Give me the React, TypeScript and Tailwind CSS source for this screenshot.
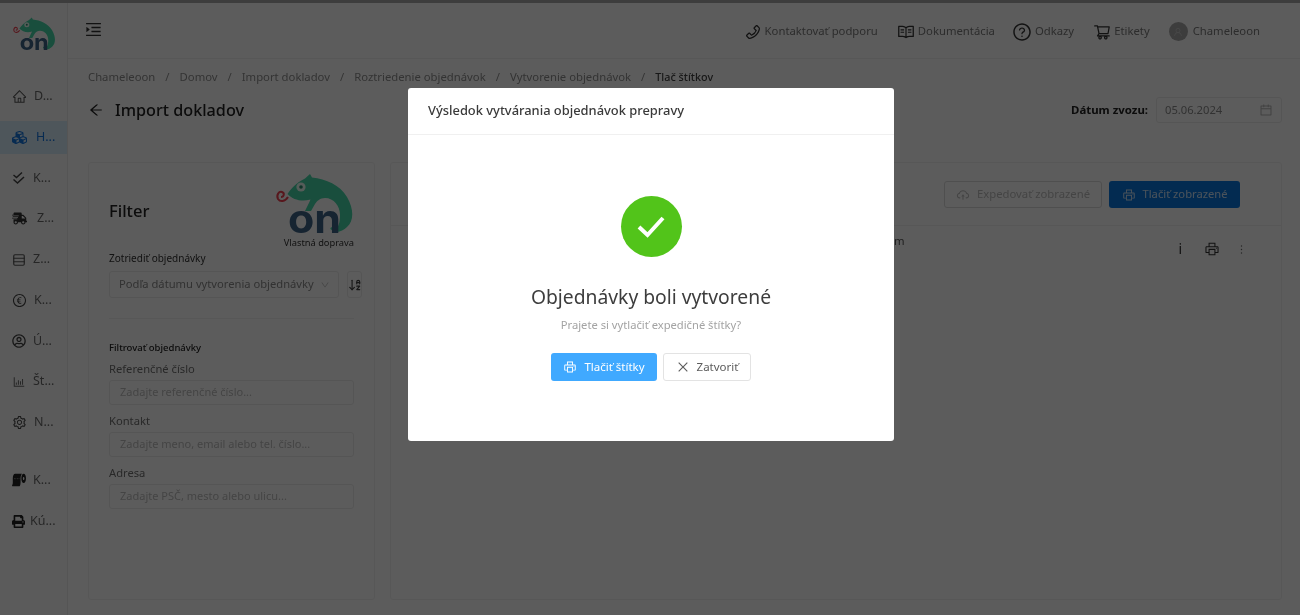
import type { ReactNode } from "react";
import {
  AiOutlineArrowLeft,
  AiOutlineBarChart,
  AiOutlineCalendar,
  AiOutlineClose,
  AiOutlineCloudUpload,
  AiOutlineDown,
  AiOutlineEuroCircle,
  AiOutlineHome,
  AiOutlineMenuUnfold,
  AiOutlineMore,
  AiOutlinePhone,
  AiOutlinePrinter,
  AiOutlineQuestionCircle,
  AiOutlineRead,
  AiOutlineSetting,
  AiOutlineShoppingCart,
  AiOutlineUser,
} from "react-icons/ai";
import {
  FaCubes,
  FaPrint,
  FaRegUserCircle,
  FaShippingFast,
  FaToiletPaper,
} from "react-icons/fa";
import { LuArrowDownAZ, LuRows3 } from "react-icons/lu";

// Chameleon logo, shared by the sidebar and the filter card
function Logo({ className }: { className: string }) {
  return (
    <svg viewBox="0 0 78 60" className={`overflow-visible ${className}`}>
      <path
        d="M11.5 21 C15 16 20 10 29 5.5 L34 1 L36 4.5 C50 6 64 12 71 24 C78 36 78 48 71 54 C66 59 59 61 54.5 56 C54 54 57 53 59 55 C62 56 64 50 64 42 C64 33 58 25 49 25 C44 25 41 28 39 31 L35 38 L29 38 C31 34 33 30 34.5 26.5 C26 29 17 27 11.5 21 Z"
        fill="#46d8a8"
      />
      <circle cx="25" cy="14" r="4.6" fill="#eafff6" />
      <circle cx="25" cy="14" r="1.8" fill="#2a8f70" />
      <path
        d="M12 24 C9 29 4 29 2 26 C0 22 3 18 6 19 C9 20 8 24 5 24"
        fill="none"
        stroke="#f04050"
        strokeWidth="2"
      />
      <text
        x="12"
        y="60"
        fontFamily="Inter, sans-serif"
        fontWeight="700"
        fontSize="40"
        textLength="53"
        lengthAdjust="spacingAndGlyphs"
        fill="#3f6488"
      >
        on
      </text>
    </svg>
  );
}

function NavItem({ icon, label, active, gap = "gap-[7px]" }: { icon: ReactNode; label: string; active?: boolean; gap?: string }) {
  return (
    <div
      className={`my-[3.9px] flex h-[33px] items-center pl-[12px] text-[12.5px] ${gap} ${
        active ? "bg-[#d9eefc] text-[#1677e0]" : "text-[#6a6a6a]"
      }`}
    >
      {icon}
      <span>{label}</span>
    </div>
  );
}

function HeaderLink({ icon, label }: { icon: ReactNode; label: string }) {
  return (
    <div className="flex items-center gap-[3px] text-[11.3px] text-[#7b7b7b]">
      {icon}
      <span>{label}</span>
    </div>
  );
}

function Field({ label, placeholder }: { label: string; placeholder: string }) {
  return (
    <div className="mb-[5px]">
      <div className="h-[22px] text-[11.2px] leading-[21px] text-[#707070]">{label}</div>
      <div className="flex h-[25px] items-center rounded-[3px] border border-[#ebebeb] px-[10px] text-[11px] text-[#bdbdbd]">
        {placeholder}
      </div>
    </div>
  );
}

const crumbs = ["Chameleoon", "Domov", "Import dokladov", "Roztriedenie objednávok", "Vytvorenie objednávok"];

export default function App() {
  return (
    <div className="relative flex h-[615px] flex-col overflow-hidden bg-white font-['Noto_Sans',sans-serif] blur-[0.4px]">
      <div className="h-[3px] shrink-0 bg-[#a8a8a8]" />
      <div className="flex min-h-0 flex-1">
        {/* Sidebar */}
        <aside className="flex w-[68px] shrink-0 flex-col border-r border-[#ececec] bg-[#fdfdfd]">
          <div className="flex h-[56px] shrink-0 items-start pl-[13px] pt-[14px]">
            <Logo className="h-[33px] w-[43px]" />
          </div>
          <nav className="mt-[17px] flex flex-col">
            <NavItem icon={<AiOutlineHome className="text-[15px] text-[#555]" />} label="D..." />
            <NavItem
              icon={<FaCubes className="text-[15px] text-[#1677e0]" />}
              label="H..."
              active
              gap="gap-[9px]"
            />
            <NavItem
              icon={
                <svg viewBox="0 0 14 14" className="h-[14px] w-[14px]" fill="none" stroke="#444" strokeWidth="1.5">
                  <path d="M1.5 4 L4.5 6.5 L10 1.5" />
                  <path d="M1.5 8.5 L5.5 12 L12 6" />
                </svg>
              }
              label="K..."
            />
            <NavItem icon={<FaShippingFast className="text-[15px] text-[#333]" />} label="Z..." gap="gap-[10px]" />
            <NavItem icon={<LuRows3 className="text-[14px] text-[#555]" />} label="Z..." />
            <NavItem icon={<AiOutlineEuroCircle className="text-[15px] text-[#444]" />} label="K..." />
            <NavItem icon={<FaRegUserCircle className="text-[14px] text-[#444]" />} label="Ú..." />
            <NavItem icon={<AiOutlineBarChart className="text-[14px] text-[#666]" />} label="Št..." />
            <NavItem icon={<AiOutlineSetting className="text-[15px] text-[#444]" />} label="N..." />
            <div className="h-[17px]" />
            <NavItem icon={<FaToiletPaper className="text-[14px] text-[#222]" />} label="K..." />
            <NavItem icon={<FaPrint className="text-[13px] text-[#222]" />} label="Kú..." gap="gap-[5px]" />
          </nav>
        </aside>

        <div className="flex min-w-0 flex-1 flex-col">
          {/* Top bar */}
          <header className="flex h-[56px] shrink-0 items-center justify-between border-b border-[#f2f2f2] pl-[16px] pr-[40px] pt-[2px]">
            <AiOutlineMenuUnfold className="-mt-[5px] text-[19px] text-[#333]" />
            <div className="flex items-center gap-[19px]">
              <HeaderLink icon={<AiOutlinePhone className="text-[18px] text-[#333]" />} label="Kontaktovať podporu" />
              <HeaderLink icon={<AiOutlineRead className="text-[18px] text-[#333]" />} label="Dokumentácia" />
              <HeaderLink icon={<AiOutlineQuestionCircle className="-ml-[2px] text-[20px] text-[#333]" />} label="Odkazy" />
              <HeaderLink icon={<AiOutlineShoppingCart className="text-[18px] text-[#333]" />} label="Etikety" />
              <div className="flex items-center gap-[5px] text-[11.3px] text-[#7b7b7b]">
                <span className="flex h-[19px] w-[19px] items-center justify-center rounded-full bg-[#a9a9a9]">
                  <AiOutlineUser className="text-[10px] text-[#c8c8c8]" />
                </span>
                <span>Chameleoon</span>
              </div>
            </div>
          </header>

          <main className="flex min-h-0 flex-1 flex-col pl-[20px] pr-[18px] pb-[15px]">
            {/* Breadcrumb */}
            <div className="mt-[10px] flex h-[16px] items-center gap-[10px] text-[11.3px] text-[#8f8f8f]">
              {crumbs.map((c) => (
                <div key={c} className="flex items-center gap-[10px]">
                  <span>{c}</span>
                  <span>/</span>
                </div>
              ))}
              <span className="text-[10.8px] font-medium text-[#444]">Tlač štítkov</span>
            </div>

            {/* Title row */}
            <div className="mt-[12px] flex h-[26px] items-center justify-between">
              <div className="flex items-center gap-[11px]">
                <AiOutlineArrowLeft className="text-[16px] text-[#222]" />
                <h1 className="text-[16.2px] font-medium text-[#222]">Import dokladov</h1>
              </div>
              <div className="flex items-center gap-[8px]">
                <span className="text-[11.4px] font-bold text-[#222]">Dátum zvozu:</span>
                <div className="flex h-[26px] w-[126px] items-center justify-between rounded-[3px] border border-[#ebebeb] px-[8px] text-[11.2px] text-[#8a8a8a]">
                  05.06.2024
                  <AiOutlineCalendar className="text-[14px] text-[#b5b5b5]" />
                </div>
              </div>
            </div>

            <div className="mt-[39px] flex min-h-0 flex-1 gap-[15px]">
              {/* Filter card */}
              <section className="flex w-[287px] shrink-0 flex-col rounded-[3px] border border-[#f2f2f2] px-[20px] pt-[10px]">
                <div className="flex h-[76px] items-center justify-between">
                  <h2 className="text-[16.5px] font-medium text-[#222]">Filter</h2>
                  <div className="flex w-[78px] flex-col items-end">
                    <Logo className="h-[60px] w-[78px]" />
                    <span className="mt-[4px] whitespace-nowrap text-[9.3px] leading-[12px] text-[#333]">Vlastná doprava</span>
                  </div>
                </div>
                <div className="mt-[1px] h-[16px] text-[10px] leading-[16px] text-[#333]">Zotriediť objednávky</div>
                <div className="mt-[5px] flex h-[27px] gap-[8px]">
                  <div className="flex w-[230px] shrink-0 items-center justify-between rounded-[3px] border border-[#ebebeb] pl-[9px] pr-[8px] text-[11.2px] text-[#8a8a8a]">
                    <span className="whitespace-nowrap">Podľa dátumu vytvorenia objednávky</span>
                    <AiOutlineDown className="text-[10px] text-[#bbb]" />
                  </div>
                  <div className="flex w-[15px] shrink-0 items-center justify-center rounded-[3px] border border-[#ebebeb]">
                    <LuArrowDownAZ className="shrink-0 text-[14px] text-[#444]" />
                  </div>
                </div>
                <div className="mt-[20px] border-t border-[#f2f2f2]" />
                <div className="mt-[21px] h-[16px] text-[9.5px] font-medium leading-[16px] text-[#222]">Filtrovať objednávky</div>
                <div className="mt-[2px] w-[245px]">
                  <Field label="Referenčné číslo" placeholder="Zadajte referenčné číslo..." />
                  <Field label="Kontakt" placeholder="Zadajte meno, email alebo tel. číslo..." />
                  <Field label="Adresa" placeholder="Zadajte PSČ, mesto alebo ulicu..." />
                </div>
              </section>

              {/* Results card */}
              <section className="flex min-w-0 flex-1 flex-col rounded-[3px] border border-[#f2f2f2] pt-[18px]">
                <div className="flex h-[45px] shrink-0 items-start justify-end gap-[7px] border-b border-[#f2f2f2] pr-[41px]">
                  <div className="flex h-[27px] w-[158px] items-center justify-center gap-[7px] rounded-[3px] border border-[#dcdcdc] text-[11.3px] text-[#bdbdbd]">
                    <AiOutlineCloudUpload className="text-[14px]" />
                    Expedovať zobrazené
                  </div>
                  <div className="flex h-[27px] w-[131px] items-center justify-center gap-[7px] rounded-[3px] bg-[#0a78e0] text-[11.2px] text-white/80">
                    <AiOutlinePrinter className="text-[14px]" />
                    Tlačiť zobrazené
                  </div>
                </div>
                <div className="flex items-start justify-between pl-[503px] pr-[33px]">
                  <span className="mt-[7px] text-[11.3px] text-[#555]">m</span>
                  <div className="mt-[13px] flex items-center gap-[15px]">
                    <span className="mr-[7px] text-[14px] leading-[20px] text-[#333]">i</span>
                    <AiOutlinePrinter className="text-[16px] text-[#333]" />
                    <AiOutlineMore className="text-[13px] text-[#666]" />
                  </div>
                </div>
              </section>
            </div>
          </main>
        </div>
      </div>

      {/* Dialog */}
      <div className="absolute inset-0 flex items-start justify-center bg-black/[0.64] pl-[2px] pt-[88px]">
        <div className="flex h-[353px] w-[486px] flex-col rounded-[3px] bg-white">
          <div className="flex h-[47px] shrink-0 items-center border-b border-[#f0f0f0] pl-[20px] text-[12.9px] font-medium text-[#3a3a3a]">
            Výsledok vytvárania objednávok prepravy
          </div>
          <div className="flex flex-col items-center pt-[61px]">
            <div className="flex h-[61px] w-[61px] items-center justify-center rounded-full bg-[#52c41a]">
              <svg viewBox="0 0 28 22" className="h-[22px] w-[28px]" fill="none" stroke="white" strokeWidth="4">
                <path d="M2 11 L10.5 19 L26 2" />
              </svg>
            </div>
            <div className="mt-[26px] text-[19.3px] leading-[28px] text-[#3d3d3d]">Objednávky boli vytvorené</div>
            <div className="mt-[5px] text-[11.2px] leading-[18px] text-[#a3a3a3]">Prajete si vytlačiť expedičné štítky?</div>
            <div className="mt-[19px] flex gap-[6px]">
              <button className="flex h-[28px] w-[106px] items-center justify-center gap-[7px] rounded-[3px] bg-[#40a9ff] text-[11.5px] text-white">
                <AiOutlinePrinter className="text-[14px]" />
                Tlačiť štítky
              </button>
              <button className="flex h-[28px] w-[88px] items-center justify-center gap-[7px] rounded-[3px] border border-[#e3e3e3] text-[11.5px] text-[#5c5c5c]">
                <AiOutlineClose className="text-[14px]" />
                Zatvoriť
              </button>
            </div>
          </div>
        </div>
      </div>
    </div>
  );
}
